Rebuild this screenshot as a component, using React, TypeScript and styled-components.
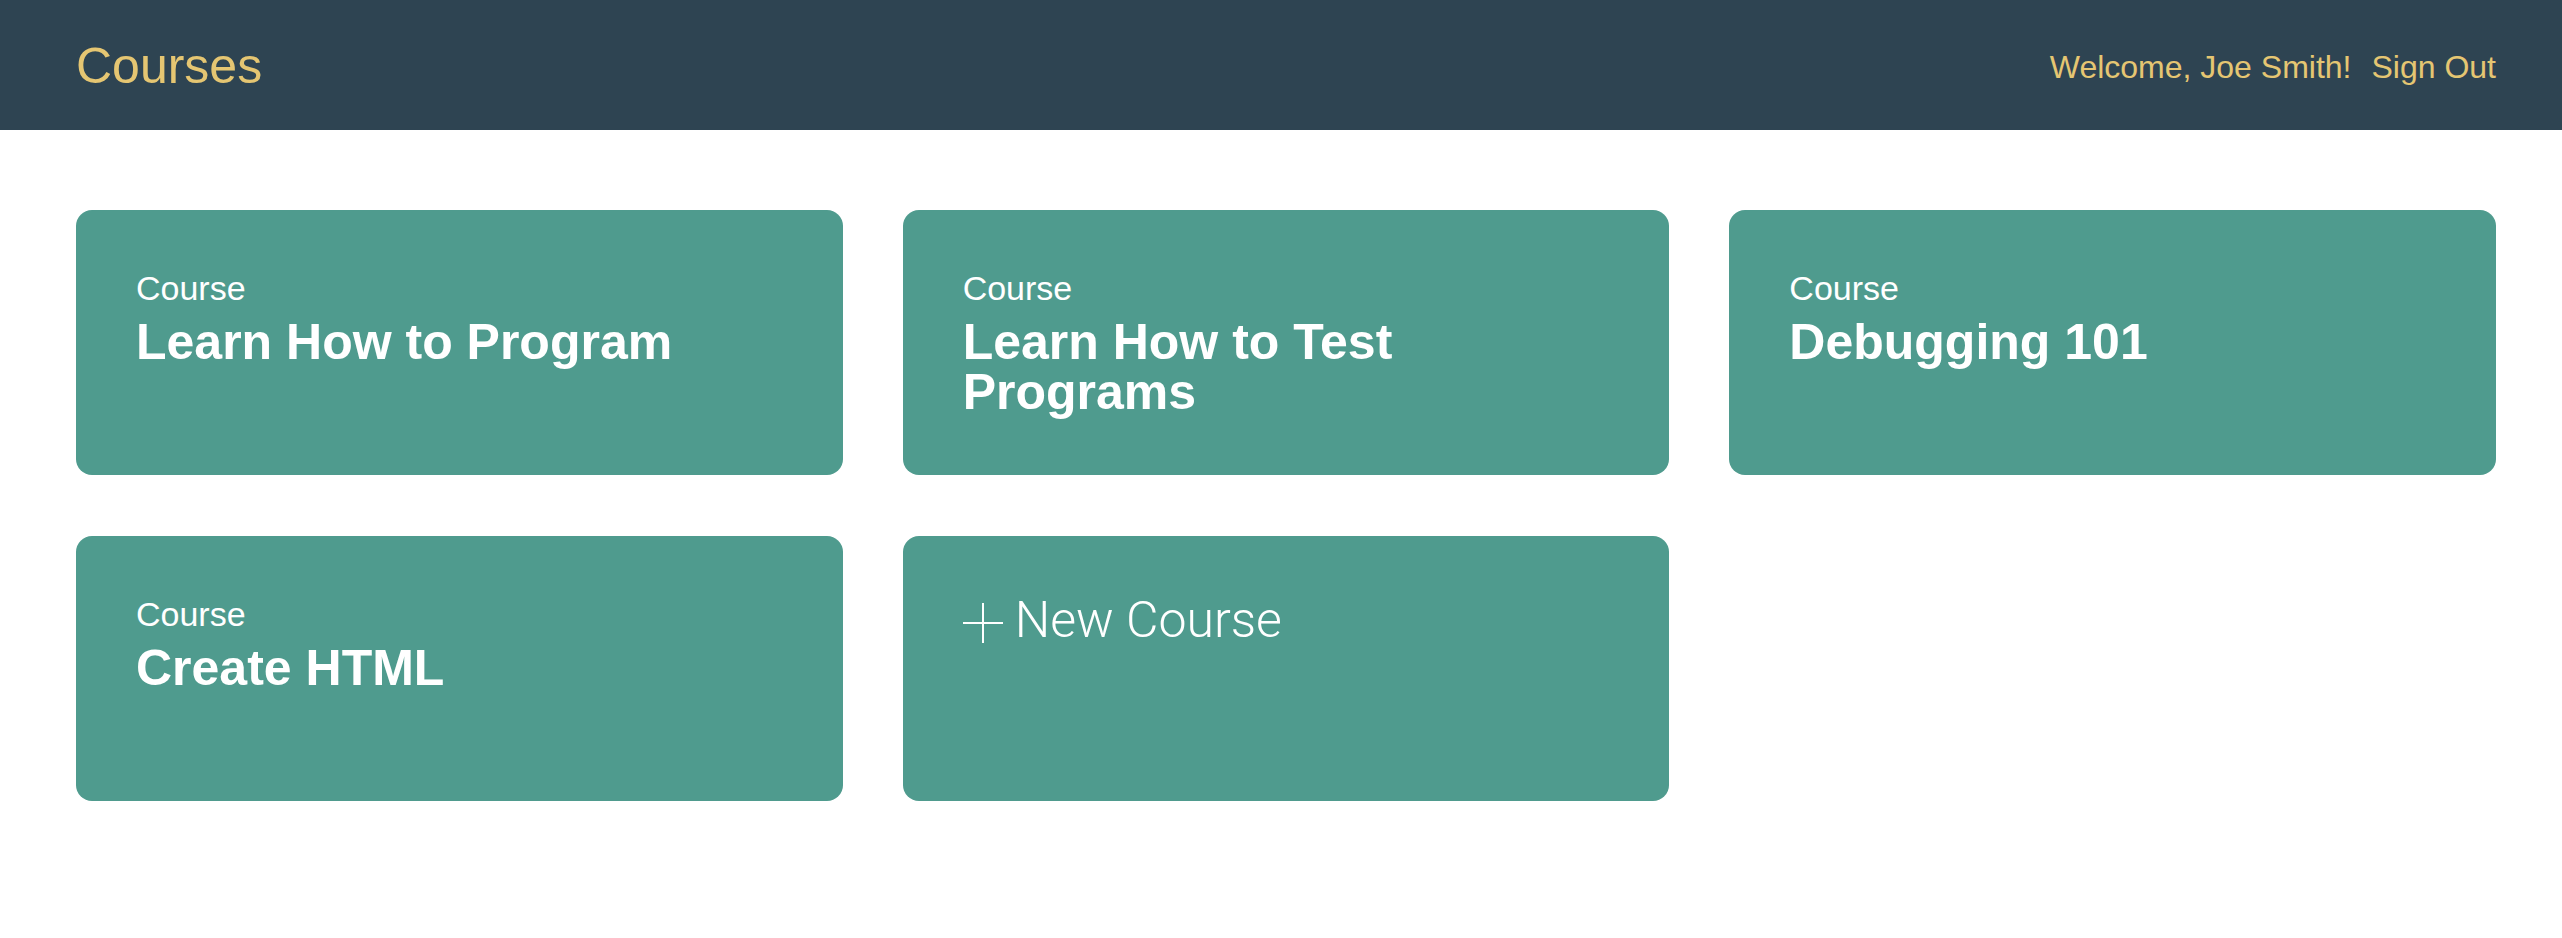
import React from "react";
import styled, { createGlobalStyle } from "styled-components";

const GlobalStyle = createGlobalStyle`
  html, body {
    margin: 0;
    padding: 0;
    background: #ffffff;
    font-family: "Liberation Sans", Helvetica, Arial, sans-serif;
  }
  * { box-sizing: border-box; }
`;

const Header = styled.header`
  height: 130px;
  background: #2e4452;
  display: flex;
  align-items: center;
  justify-content: space-between;
  padding: 3px 66px 0 76px;
`;

const Title = styled.h1`
  margin: 0;
  font-size: 50px;
  font-weight: 400;
  color: #e5c672;
  line-height: 1.15;
`;

const UserNav = styled.nav`
  display: flex;
  align-items: center;
  gap: 20px;
  font-size: 32px;
  color: #e5c672;
  line-height: 1.15;
  padding-top: 1px;
`;

const SignOut = styled.a`
  color: inherit;
  text-decoration: none;
`;

const Main = styled.main`
  padding: 80px 66px 0 76px;
  display: grid;
  grid-template-columns: repeat(3, 1fr);
  column-gap: 60px;
  row-gap: 61px;
`;

const Card = styled.a`
  display: block;
  height: 265px;
  background: #4f9b8e;
  border-radius: 16px;
  padding: 59px 60px;
  color: #ffffff;
  text-decoration: none;
`;

const CardLabel = styled.div`
  font-size: 34px;
  line-height: 1.15;
`;

const CardTitle = styled.h3`
  margin: 9px 0 0;
  font-size: 50px;
  font-weight: 700;
  line-height: 50px;
`;

const NewCourseInner = styled.div`
  display: flex;
  align-items: flex-start;
  gap: 12px;
`;

const PlusIcon = styled.svg`
  flex: none;
  margin-top: 8px;
`;

const NewCourseText = styled.span`
  font-family: Roboto, "Liberation Sans", sans-serif;
  font-weight: 300;
  font-size: 50px;
  line-height: 59px;
  margin-top: -4px;
`;

const courses = [
  "Learn How to Program",
  "Learn How to Test Programs",
  "Debugging 101",
  "Create HTML",
];

export default function App() {
  return (
    <>
      <GlobalStyle />
      <Header>
        <Title>Courses</Title>
        <UserNav>
          <span>Welcome, Joe Smith!</span>
          <SignOut href="#">Sign Out</SignOut>
        </UserNav>
      </Header>
      <Main>
        {courses.map((c) => (
          <Card href="#" key={c}>
            <CardLabel>Course</CardLabel>
            <CardTitle>{c}</CardTitle>
          </Card>
        ))}
        <Card href="#">
          <NewCourseInner>
            <PlusIcon width="40" height="40" viewBox="0 0 40 40">
              <line x1="0" y1="20" x2="40" y2="20" stroke="#fff" strokeWidth="2" />
              <line x1="20" y1="0" x2="20" y2="40" stroke="#fff" strokeWidth="2" />
            </PlusIcon>
            <NewCourseText>New Course</NewCourseText>
          </NewCourseInner>
        </Card>
      </Main>
    </>
  );
}
